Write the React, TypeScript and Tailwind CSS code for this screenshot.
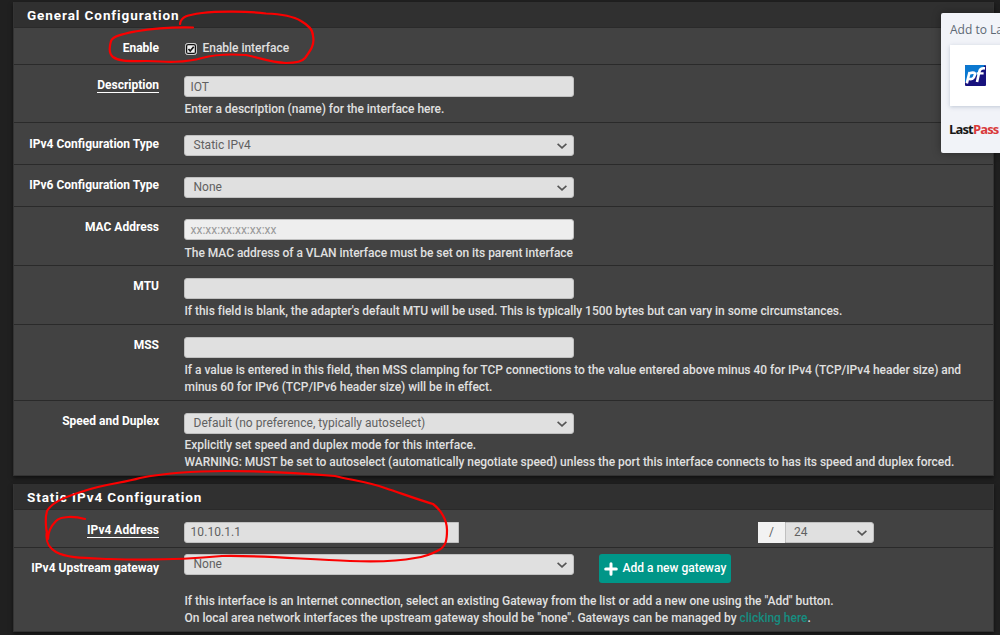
import type { ReactNode } from "react";

const helpText = "whitespace-nowrap pl-[0.5px] text-[12px] leading-[17px] font-medium tracking-[-0.032px] text-[#e0e0e0]";

function Chevron() {
  return (
    <svg className="h-[6px] w-[10px] shrink-0" viewBox="0 0 10 6" fill="none" stroke="#555555" strokeWidth="1.6">
      <path d="M0.6 0.8 L5 4.8 L9.4 0.8" />
    </svg>
  );
}

function Row({ label, underline, height, labelTop = "pt-[13px]", children }: {
  label: string;
  underline?: boolean;
  height: string;
  labelTop?: string;
  children: ReactNode;
}) {
  return (
    <div className={`flex border-t border-[#2a2a2a] ${height}`}>
      <div className={`flex w-[145px] shrink-0 items-start justify-end ${labelTop}`}>
        <span
          className={`block whitespace-nowrap text-[12px] leading-[14px] font-bold text-white ${
            underline ? "border-b border-white" : ""
          }`}
        >
          {label}
        </span>
      </div>
      <div className="ml-[25px] min-w-0 flex-1">{children}</div>
    </div>
  );
}

function Input({ value, placeholder }: { value?: string; placeholder?: string }) {
  return (
    <div
      className={`flex h-[21px] w-[390px] items-center rounded-[3px] border border-[#c0c0c0] px-[5.5px] text-[12px] leading-[16px] ${
        placeholder ? "bg-[#eeeeee] text-[#999999]" : "bg-[#e0e0e0] text-[#606060]"
      }`}
    >
      {value ?? placeholder}
    </div>
  );
}

function Select({ value }: { value: string }) {
  return (
    <div className="flex h-[21px] w-[390px] items-center justify-between rounded-[3px] border border-[#c0c0c0] bg-[#e0e0e0] pr-[6px] pl-[8.5px] text-[12px] leading-[16px] text-[#606060]">
      <span className="pb-[2px] tracking-[0.02px]">{value}</span>
      <Chevron />
    </div>
  );
}

function Panel({ title, titleLeading, children }: { title: string; titleLeading: string; children: ReactNode }) {
  return (
    <section className="w-[981px] border-x border-b border-[#333333] bg-[#424242] shadow-[0_2px_4px_rgba(0,0,0,0.5)]">
      <h2 className={`h-[25px] bg-[#303030] pl-[13px] text-[13.5px] font-bold tracking-[0.92px] text-white ${titleLeading}`}>
        {title}
      </h2>
      {children}
    </section>
  );
}

function LastPassPopup() {
  return (
    <aside className="absolute top-[13px] left-[941px] h-[140px] w-[59px] overflow-hidden rounded-l-[2px] bg-[#f1f3f8] pl-[9px] shadow-[0_0_8px_rgba(0,0,0,0.35)]">
      <div className="h-[32px] pt-[8px] font-['Open_Sans',sans-serif] text-[12px] leading-[17px] whitespace-nowrap text-[#5d6874]">
        Add to LastPass?
      </div>
      <div className="flex h-[61px] w-[200px] items-center bg-white pl-[15px] shadow-[0_1px_4px_rgba(100,120,150,0.35)]">
        <svg className="h-[21px] w-[21px]" viewBox="0 0 21 21">
          <rect width="21" height="21" rx="1" fill="#17117d" />
          <path d="M1 0 H20 L17 4 L11 11 L5 14 L0 17 V1 Z" fill="#0b78d0" />
          <g fill="none" stroke="white" strokeWidth="2.6">
            <path d="M1.8 18.4 L4.6 7" />
            <path d="M4.4 8.2 Q10.8 6.4 9.8 10 Q8.8 15.2 3 13.8" />
            <path d="M12 17 L14.4 6.4 Q15.2 2.8 20 3.4" />
            <path d="M11.6 8.4 H18.6" strokeWidth="2.2" />
          </g>
        </svg>
      </div>
      <div className="-ml-[1px] pt-[14px] font-['Open_Sans',sans-serif] text-[13px] leading-[19px] font-bold tracking-[-0.85px] whitespace-nowrap">
        <span className="text-[#171717]">Last</span>
        <span className="text-[#d93a3a]">Pass</span>
      </div>
    </aside>
  );
}

function Annotations() {
  return (
    <svg
      className="pointer-events-none absolute inset-0 h-[635px] w-[1000px]"
      viewBox="0 0 1000 635"
      fill="none"
      stroke="#fb0000"
      strokeWidth="2.2"
      strokeLinecap="round"
      strokeLinejoin="round"
    >
      <path d="M193 27.5 C174 27 150 29 135 31.5 C123 34 113 36 111 41 C109 48 109 54 113 57 C120 62 130 61 146 61 C166 62 185 63 202 58 C216 54 231 54 246 55 C261 58 269 62 286 63 C296 63 302 62 305 58 C310 51 315 45 313 36 C313 29 308 25 301 21 C293 16 281 14 266 13.5 C248 11 217 11 202 13 C188 15 181 16 180 24" />
      <path d="M85 519 C74 516 61 516 56 521 C51 526 48 532 48 539 C45 525 45 518 47 511 C53 501 68 496 84 491 C104 484 123 483 140 478 C165 473 194 471 226 471 C266 471 300 473 335 476 C351 480 369 482 385 488 C403 494 419 500 433 504 C441 510 447 520 447 530 C447 540 446 546 439 550 C430 555 424 557 415 558 C395 562 375 562 350 561 C300 559 255 555 222 556 C180 560 140 560 109 559 C83 558 67 558 56 552 C48 547 45 541 47 531" />
    </svg>
  );
}

export default function App() {
  return (
    <main className="relative h-[635px] w-[1000px] overflow-hidden bg-[#202020] pt-[2px] pl-[13px] font-[Roboto,sans-serif]">
      <div className="flex flex-col gap-[8px]">
        <Panel title="General Configuration" titleLeading="leading-[26px]">
          <Row label="Enable" height="h-[37px]">
            <div className="flex items-center gap-[5px] pt-[12px] pl-[1px]">
              <svg className="mt-[1px] h-[12px] w-[12px]" viewBox="0 0 12 12" fill="none">
                <rect x="0.5" y="0.5" width="11" height="11" rx="2" fill="#eeeeee" stroke="#cccccc" />
                <rect x="1.6" y="1.6" width="8.8" height="8.8" rx="1.5" fill="#f0f0f0" stroke="#111111" strokeWidth="1.3" />
                <path d="M3.5 6 L5.2 8 L8.7 3.7" stroke="#111111" strokeWidth="1.7" />
              </svg>
              <span className={helpText}>Enable interface</span>
            </div>
          </Row>
          <Row label="Description" underline height="h-[58px]">
            <div className="pt-[11px]">
              <Input value="IOT" />
              <p className={`${helpText} pt-[4px]`}>Enter a description (name) for the interface here.</p>
            </div>
          </Row>
          <Row label="IPv4 Configuration Type" height="h-[42px]" labelTop="pt-[14px]">
            <div className="pt-[12px]">
              <Select value="Static IPv4" />
            </div>
          </Row>
          <Row label="IPv6 Configuration Type" height="h-[42px]">
            <div className="pt-[12px]">
              <Select value="None" />
            </div>
          </Row>
          <Row label="MAC Address" height="h-[59px]">
            <div className="pt-[12px]">
              <Input placeholder="xx:xx:xx:xx:xx:xx" />
              <p className={`${helpText} pt-[5px]`}>
                The MAC address of a VLAN interface must be set on its parent interface
              </p>
            </div>
          </Row>
          <Row label="MTU" height="h-[59px]">
            <div className="pt-[12px]">
              <Input />
              <p className={`${helpText} pt-[4px]`}>
                If this field is blank, the adapter's default MTU will be used. This is typically 1500 bytes but can vary in some circumstances.
              </p>
            </div>
          </Row>
          <Row label="MSS" height="h-[76px]">
            <div className="pt-[12px]">
              <Input />
              <p className={`${helpText} pt-[4px]`}>
                If a value is entered in this field, then MSS clamping for TCP connections to the value entered above minus 40 for IPv4 (TCP/IPv4 header size) and
                <br />
                minus 60 for IPv6 (TCP/IPv6 header size) will be in effect.
              </p>
            </div>
          </Row>
          <Row label="Speed and Duplex" height="h-[75px]">
            <div className="pt-[12px]">
              <Select value="Default (no preference, typically autoselect)" />
              <p className={`${helpText} pt-[3px]`}>
                Explicitly set speed and duplex mode for this interface.
                <br />
                WARNING: MUST be set to autoselect (automatically negotiate speed) unless the port this interface connects to has its speed and duplex forced.
              </p>
            </div>
          </Row>
        </Panel>

        <Panel title="Static IPv4 Configuration" titleLeading="leading-[27px]">
          <Row label="IPv4 Address" underline height="h-[38px]">
            <div className="flex pt-[12px] text-[12px] leading-[16px] text-[#606060]">
              <div className="flex h-[21px] w-[275px] items-center rounded-l-[3px] border border-[#c0c0c0] bg-[#e0e0e0] px-[5.5px] pb-[1px] tracking-[0.08px]">
                10.10.1.1
              </div>
              <div className="ml-[299px] flex h-[21px] w-[27px] items-center justify-center bg-[#f2f2f2] pb-[1px]">/</div>
              <div className="flex h-[21px] w-[89px] items-center justify-between rounded-r-[3px] border border-[#c0c0c0] bg-[#e0e0e0] pr-[6px] pl-[8px]">
                <span className="pb-[2px]">24</span>
                <Chevron />
              </div>
            </div>
          </Row>
          <Row label="IPv4 Upstream gateway" height="h-[84px]">
            <div className="flex gap-[25px] pt-[6px]">
              <Select value="None" />
              <button className="flex h-[29px] w-[132px] items-center gap-[5px] rounded-[3px] bg-[#009688] pl-[4.5px] text-[12px] leading-[16px] font-medium whitespace-nowrap text-white">
                <svg className="h-[14px] w-[14px] shrink-0" viewBox="0 0 14 14" stroke="white" strokeWidth="3" strokeLinecap="round">
                  <path d="M7 1.7 V12.3 M1.7 7 H12.3" />
                </svg>
                <span className="pb-[2px]">Add a new gateway</span>
              </button>
            </div>
            <p className={`${helpText} pt-[10px]`}>
              If this interface is an Internet connection, select an existing Gateway from the list or add a new one using the "Add" button.
              <br />
              <span className="tracking-[-0.015px]">
                On local area network interfaces the upstream gateway should be "none". Gateways can be managed by{" "}
                <a className="text-[#168d80]">clicking here</a>.
              </span>
            </p>
          </Row>
        </Panel>
      </div>
      <LastPassPopup />
      <Annotations />
    </main>
  );
}
